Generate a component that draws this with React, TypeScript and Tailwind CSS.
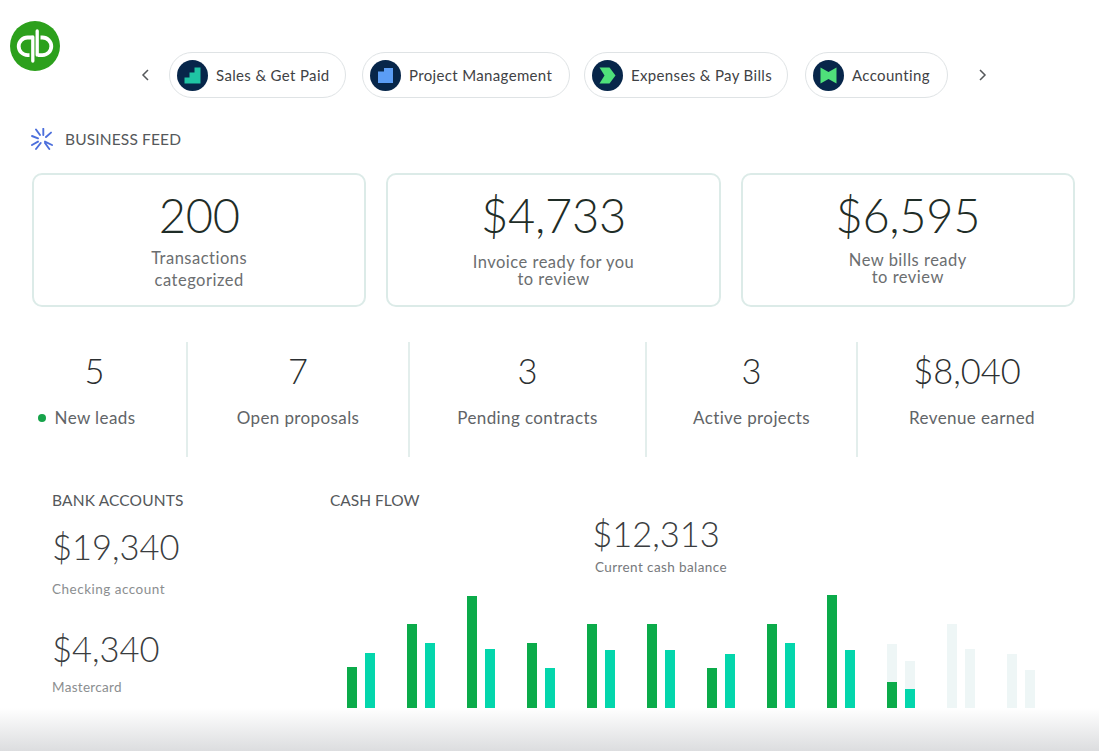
import { Fragment } from "react";

const FONT = "font-['Lato','Open_Sans',sans-serif]";

function Logo() {
  return (
    <svg width="50" height="50" viewBox="0 0 50 50" className="shrink-0">
      <circle cx="25" cy="25" r="25" fill="#2ca01c" />
      <path d="M22 16.500h-4.500a8.800 8.800 0 0 0 0 17.600h2" fill="none" stroke="#fff" strokeWidth="3.800" />
      <path d="M28 34.100h4.500a8.800 8.800 0 0 0 0-17.600h-2" fill="none" stroke="#fff" strokeWidth="3.800" />
      <path d="M22.800 16v24M27.200 10v24" fill="none" stroke="#fff" strokeWidth="3.300" strokeLinecap="round" />
    </svg>
  );
}

function Burst() {
  return (
    <svg width="24" height="24" viewBox="0 0 24 24" fill="none" stroke="#4c6fdc" strokeWidth="1.900" strokeLinecap="round" className="shrink-0">
      <path d="M6 1.500l4 5.500M13.300.8V7M21 4.600L16 9M2 8l6 2.300M2 17l6-3.400M6 21l4.700-6M15 15l4.300 6M22 17l-7-3.400" />
    </svg>
  );
}

function PillIcon({ kind }: { kind: number }) {
  return (
    <span className="flex h-[31px] w-[31px] shrink-0 items-center justify-center rounded-full bg-[#07264a]">
      <svg width="19" height="19" viewBox="0 0 19 19">
        {kind === 0 && <path d="M1.500 17.500V11.500H6.500V6.500H11.500V1.500H17.500V17.500z" fill="#1fc4a4" />}
        {kind === 1 && <path d="M2 17V5.500H8V2H17V17z" fill="#5b9df5" />}
        {kind === 2 && <path d="M1.500 1.500h10l6 8-6 8h-10l5-8z" fill="#4fe07a" />}
        {kind === 3 && <path d="M1.500 1.500L9.500 6l8-4.500v16l-8-4.500-8 4.500z" fill="#4fe07a" />}
      </svg>
    </span>
  );
}

function Pill({ kind, label, w }: { kind: number; label: string; w: string }) {
  return (
    <div className={`flex h-[46px] items-center gap-[8px] rounded-full border border-[#dfe3e5] pl-[7px] ${w}`}>
      <PillIcon kind={kind} />
      <span className="text-[15px] tracking-[0.35px] text-[#3f4245]">{label}</span>
    </div>
  );
}

function Card({ value, lines, cls }: { value: string; lines: string[]; cls: string }) {
  return (
    <div className="flex h-[134px] flex-col items-center rounded-[10px] border-2 border-[#dcebe8] pt-[12px]">
      <div className="text-[47px] font-light leading-[56px] tracking-[-0.3px] text-[#1f2d27]">{value}</div>
      <div className={`text-center text-[16.500px] tracking-[0.5px] text-[#6b6e70] ${cls}`}>
        {lines.map((l, i) => (
          <Fragment key={l}>
            {i > 0 && <br />}
            {l}
          </Fragment>
        ))}
      </div>
    </div>
  );
}

function Metric({ value, label, w, dot, divider, valueCls = "" }: { value: string; label: string; w: string; dot?: boolean; divider?: boolean; valueCls?: string }) {
  return (
    <div className={`flex h-[115px] shrink-0 flex-col items-center pt-[7px] ${w} ${divider ? "border-r-2 border-[#e3eeec]" : ""} ${dot ? "pr-[29px]" : ""}`}>
      <div className={`text-[34.500px] font-light leading-[44px] text-[#2c2f31] ${valueCls}`}>{value}</div>
      <div className={`mt-[13px] flex items-center gap-[9px] text-[17px] leading-[24px] tracking-[0.4px] text-[#616467] ${dot ? "-ml-[16px]" : ""}`}>
        {dot && <span className="h-[8px] w-[8px] rounded-full bg-[#16a34a]" />}
        {label}
      </div>
    </div>
  );
}

const groups = [
  { a: 41, b: 55 },
  { a: 84, b: 65 },
  { a: 112, b: 59 },
  { a: 65, b: 40 },
  { a: 84, b: 58 },
  { a: 84, b: 58 },
  { a: 40, b: 54 },
  { a: 84, b: 65 },
  { a: 113, b: 58 },
  { a: 26, b: 19, ga: 64, gb: 47 },
  { a: 0, b: 0, ga: 84, gb: 59 },
  { a: 0, b: 0, ga: 54, gb: 38 },
];

function Bar({ h, ghost, color }: { h: number; ghost?: number; color: string }) {
  return (
    <div className="flex w-[10px] flex-col justify-end bg-[#eef6f6]" style={{ height: ghost ?? h }}>
      <div className={color} style={{ height: h }} />
    </div>
  );
}

export default function App() {
  return (
    <div className={`relative h-[751px] w-[1099px] overflow-hidden bg-white ${FONT}`}>
      <div className="flex h-[99px] items-start pl-[10px] pt-[21px]">
        <Logo />
        <div className="ml-[79px] mt-[31px] flex items-center">
          <svg width="12" height="14" viewBox="0 0 12 14" fill="none" stroke="#55585b" strokeWidth="1.500" className="mr-[18px]">
            <path d="M9 2L4 7l5 5" />
          </svg>
          <div className="flex">
            <Pill kind={0} label="Sales & Get Paid" w="w-[177px]" />
            <div className="ml-[16px]"><Pill kind={1} label="Project Management" w="w-[208px]" /></div>
            <div className="ml-[14px]"><Pill kind={2} label="Expenses & Pay Bills" w="w-[204px]" /></div>
            <div className="ml-[17px]"><Pill kind={3} label="Accounting" w="w-[143px]" /></div>
          </div>
          <svg width="12" height="14" viewBox="0 0 12 14" fill="none" stroke="#55585b" strokeWidth="1.500" className="ml-[29px]">
            <path d="M3 2l5 5-5 5" />
          </svg>
        </div>
      </div>

      <div className="ml-[30px] mt-[29px] flex items-center gap-[11px]">
        <Burst />
        <span className="-mt-[1px] text-[15.500px] tracking-[0.15px] text-[#55585b]">BUSINESS FEED</span>
      </div>

      <div className="ml-[32px] mr-[24px] mt-[21px] grid grid-cols-3 gap-[20px]">
        <Card value="200" lines={["Transactions", "categorized"]} cls="mt-[4px] leading-[22px]" />
        <Card value="$4,733" lines={["Invoice ready for you", "to review"]} cls="mt-[11px] leading-[17px]" />
        <Card value="$6,595" lines={["New bills ready", "to review"]} cls="mt-[9px] leading-[17px]" />
      </div>

      <div className="ml-[32px] mt-[35px] flex">
        <Metric value="5" label="New leads" w="w-[156px]" dot divider />
        <Metric value="7" label="Open proposals" w="w-[222px]" divider />
        <Metric value="3" label="Pending contracts" w="w-[237px]" divider />
        <Metric value="3" label="Active projects" w="w-[211px]" divider />
        <Metric value="$8,040" label="Revenue earned" w="w-[228px]" valueCls="mr-[10px]" />
      </div>

      <div className="ml-[52px] mt-[33px] flex">
        <div className="w-[278px] shrink-0">
          <div className="text-[15.500px] leading-[20px] tracking-[0.15px] text-[#55585b]">BANK ACCOUNTS</div>
          <div className="mt-[15px] text-[34.500px] font-light leading-[44px] text-[#3a3d3f]">$19,340</div>
          <div className="mt-[11px] text-[13.500px] leading-[18px] tracking-[0.5px] text-[#8b8e90]">Checking account</div>
          <div className="mt-[29px] text-[34.500px] font-light leading-[44px] text-[#3a3d3f]">$4,340</div>
          <div className="mt-[7px] text-[13.500px] leading-[18px] tracking-[0.3px] text-[#8b8e90]">Mastercard</div>
        </div>
        <div className="flex-1">
          <div className="text-[15.500px] leading-[20px] text-[#55585b]">CASH FLOW</div>
          <div className="ml-[17px] flex w-[618px] flex-col items-center">
            <div className="mt-[2px] text-[34.500px] font-light leading-[44px] text-[#3a3d3f]">$12,313</div>
            <div className="ml-[10px] mt-[2px] text-[13.500px] leading-[18px] tracking-[0.4px] text-[#77797c]">Current cash balance</div>
          </div>
          <div className="ml-[17px] mt-[19px] flex h-[113px] items-end gap-[32px]">
            {groups.map((g, i) => (
              <div key={i} className="flex items-end gap-[8px]">
                <Bar h={g.a} ghost={g.ga} color="bg-[#0bab4a]" />
                <Bar h={g.b} ghost={g.gb} color="bg-[#04d6ac]" />
              </div>
            ))}
          </div>
        </div>
      </div>

      <div className="absolute bottom-0 left-0 right-0 h-[43px] bg-gradient-to-b from-white to-[#dcdddf]" />
    </div>
  );
}
